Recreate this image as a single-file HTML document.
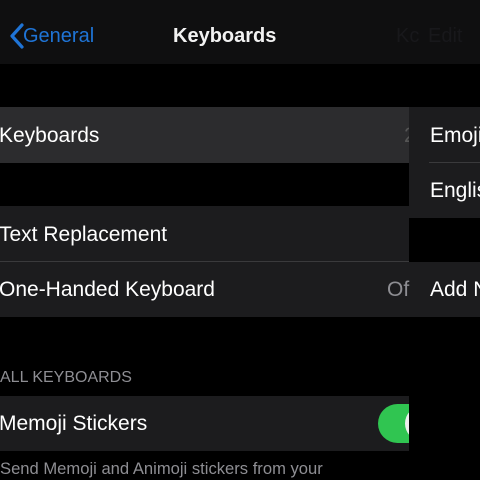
<!DOCTYPE html>
<html><head><style>
body{margin:0;width:480px;height:480px;background:#000;overflow:hidden;position:relative;font-family:"Liberation Sans",sans-serif;color:#fff}
.a{position:absolute;white-space:nowrap}
.r{position:absolute;font-size:21px;line-height:1;white-space:nowrap}
</style></head><body>
<div class="a" style="left:0;top:0;width:480px;height:64px;background:#0f0f10"></div>
<svg class="a" style="left:9px;top:23px" width="16" height="26"><path d="M13 2 L3 13 L13 24" stroke="#1f74d6" stroke-width="3.2" fill="none" stroke-linecap="round" stroke-linejoin="round"/></svg>
<div class="r" style="left:23px;top:26px;font-size:20px;color:#1f74d6">General</div>
<div class="r" style="left:173px;top:26px;font-size:20px;font-weight:bold;color:#f2f2f2">Keyboards</div>
<div class="r" style="left:396px;top:26px;font-size:20px;color:#18181b">Kc</div>
<div class="r" style="left:428px;top:26px;font-size:20px;color:#18181b">Edit</div>

<div class="a" style="left:0;top:107px;width:409px;height:56px;background:#2c2c2e"></div>
<div class="r" style="left:-1px;top:125px">Keyboards</div>
<div class="r" style="left:404px;top:125px;color:#555">2</div>

<div class="a" style="left:409px;top:0;width:71px;height:480px;overflow:hidden">
<div class="a" style="left:0;top:107px;width:71px;height:111px;background:#1c1c1e"></div>
<div class="a" style="left:20px;top:162px;width:51px;height:1px;background:#3a3a3c"></div>
<div class="r" style="left:21px;top:125px">Emoji</div>
<div class="r" style="left:21px;top:180px">English</div>
<div class="a" style="left:0;top:262px;width:71px;height:55px;background:#1c1c1e"></div>
<div class="r" style="left:21px;top:279px">Add New</div>
</div>

<div class="a" style="left:0;top:206px;width:409px;height:111px;background:#1c1c1e"></div>
<div class="a" style="left:0;top:261px;width:409px;height:1px;background:#3a3a3c"></div>
<div class="r" style="left:-1px;top:224px">Text Replacement</div>
<div class="r" style="left:-1px;top:279px">One-Handed Keyboard</div>
<div class="r" style="left:387px;top:279px;color:#8e8e93">Of</div>

<div class="a" style="left:0;top:369px;font-size:16px;color:#8e8e93">ALL KEYBOARDS</div>
<div class="a" style="left:0;top:396px;width:409px;height:55px;background:#1c1c1e;overflow:hidden">
<div class="a" style="left:378px;top:8px;width:51px;height:39px;border-radius:20px;background:#30c551"></div>
<div class="a" style="left:405px;top:10px;width:35px;height:35px;border-radius:50%;background:#eee"></div>
</div>
<div class="r" style="left:-1px;top:413px">Memoji Stickers</div>
<div class="a" style="left:0;top:459px;font-size:16.6px;color:#8e8e93">Send Memoji and Animoji stickers from your</div>
</body></html>
